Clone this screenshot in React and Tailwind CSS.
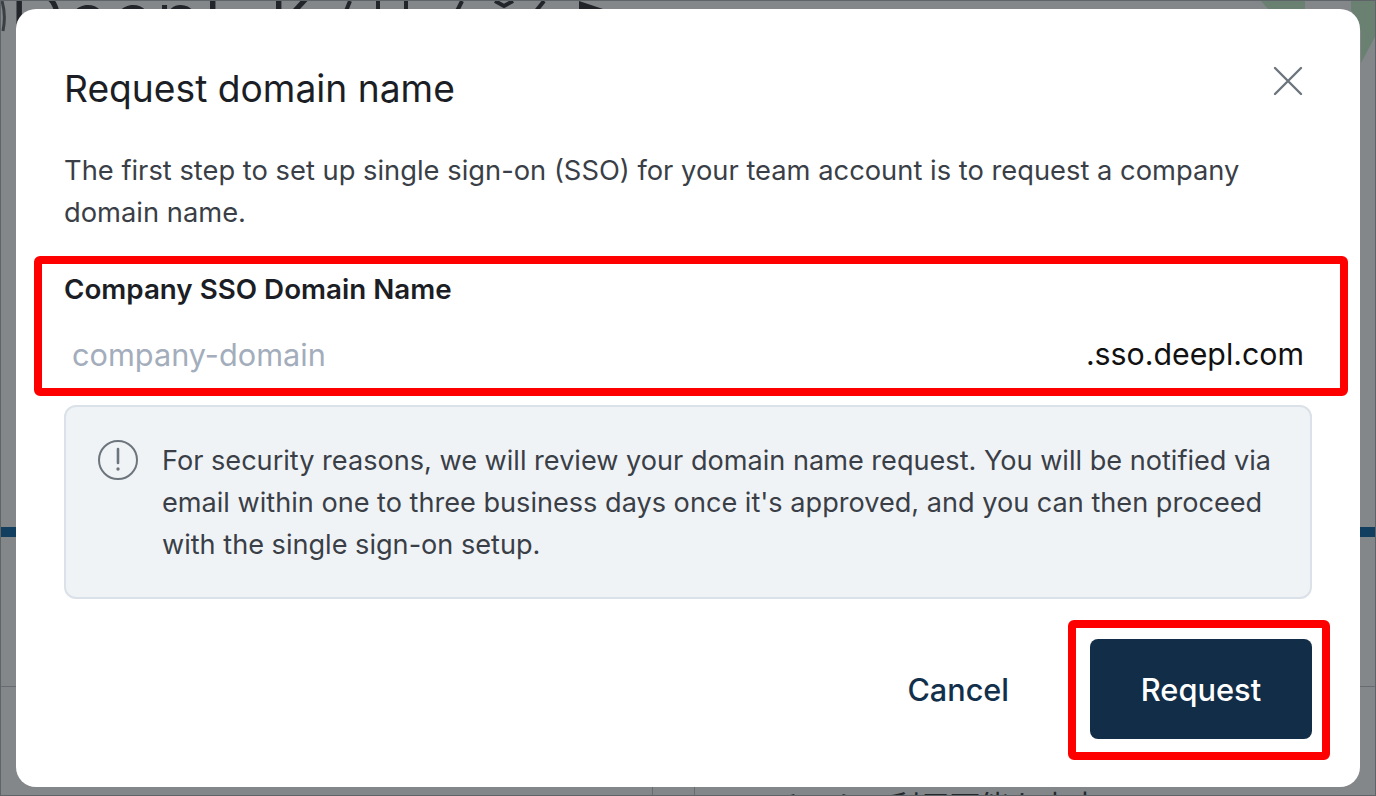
import React from "react";

function Backdrop() {
  return (
    <div aria-hidden="true" className="absolute inset-0 overflow-hidden border border-[#5f6468] bg-[#83878a]">
      <svg className="absolute inset-0 h-[796px] w-[1376px]" viewBox="0 0 1376 796" fill="none">
        <path d="M1260 0 H1304 V9 H1268 Z" fill="#6a8071" />
        <path d="M1350 0 H1376 V32 L1360 62 V30 L1350 9 Z" fill="#6a8071" />
        <path d="M1 0 C4 10 4 20 2 30" stroke="#3a3f44" strokeWidth="3" />
        <g stroke="#22262b" strokeWidth="4">
          <path d="M349 0 L345 10" />
          <path d="M377 0 V10" />
          <path d="M405 0 V10" />
          <path d="M461 0 L456 10" />
          <path d="M494 0 L503 5 L512 0" />
          <path d="M543 0 L535 10" />
        </g>
        <path d="M578 0 L608 10 H578 Z" fill="#22262b" />
      </svg>
      <div className="absolute left-[8px] top-[-28px] whitespace-nowrap text-[78px] font-light leading-[94px] text-[#22262b]">DeepL K</div>
      <div className="absolute left-0 top-[526px] h-[10px] w-full bg-[#123f5f]" />
      <div className="absolute left-0 top-[685px] h-px w-full bg-[#686c70]" />
      <div className="absolute left-[651px] top-[786px] h-[9px] w-px bg-[#686c70]" />
      <div className="absolute left-[693px] top-[786px] h-[9px] w-px bg-[#686c70]" />
      <div className="absolute left-[770px] top-[781px] whitespace-nowrap font-['Noto_Sans_CJK_JP',sans-serif] text-[30px] leading-[44px] text-[#25292c]">チームで利用可能な文字</div>
    </div>
  );
}

export default function App() {
  return (
    <div className="relative flex h-[796px] w-[1376px] justify-center overflow-hidden pt-[9px] font-['Inter','Liberation_Sans',sans-serif]">
      <Backdrop />
      <div className="relative h-[778px] w-[1344px] rounded-[20px] bg-white px-12">
        <div className="flex items-center justify-between pr-[9px] pt-[54px]">
          <h2 className="text-[37.2px] font-normal leading-[52px] text-[#1b1e25]">Request domain name</h2>
          <svg className="-mt-[16px] h-[30px] w-[30px]" viewBox="0 0 30 30" fill="none" stroke="#6c757d" strokeWidth="2.4" strokeLinecap="round">
            <path d="M2 2 L28 28 M28 2 L2 28" />
          </svg>
        </div>

        <p className="mt-[35px] text-[27.32px] leading-[42px] text-[#3a3f47]">
          The first step to set up single sign-on (SSO) for your team account is to request a company domain name.
        </p>

        <div className="relative mt-[36px] h-[120px]">
          <div className="absolute -bottom-[6px] -left-[30px] -right-[36px] -top-[14px] rounded-[6px] border-[8px] border-[#ff0000]" />
          <label className="block text-[27.75px] font-semibold leading-[38px] text-[#1b1e25]">Company SSO Domain Name</label>
          <div className="mt-[17px] flex h-[60px] items-center justify-between px-2">
            <span className="text-[30.7px] text-[#a3adbc]">company-domain</span>
            <span className="text-[30.3px] text-[#111111]">.sso.deepl.com</span>
          </div>
        </div>

        <div className="mt-[15px] flex h-[194px] gap-[24px] rounded-[12px] border-2 border-[#dae1e8] bg-[#f0f3f6] pl-[32px] pr-[24px] pt-[33px]">
          <svg className="h-[40px] w-[40px] shrink-0" viewBox="0 0 40 40" fill="none" stroke="#6c757d" strokeWidth="2">
            <circle cx="20" cy="20" r="19" />
            <path d="M20 9 V23" strokeWidth="2.6" strokeLinecap="round" />
            <circle cx="20" cy="29" r="1.7" fill="#6c757d" stroke="none" />
          </svg>
          <p className="text-[27.12px] leading-[42px] text-[#3a3f47]">
            For security reasons, we will review your domain name request. You will be notified via email within one to three business days once it's approved, and you can then proceed with the single sign-on setup.
          </p>
        </div>

        <div className="mt-[40px] flex items-center justify-end gap-[81px]">
          <button className="pt-[2px] text-[30.6px] font-medium text-[#12304b]">Cancel</button>
          <div className="relative">
            <div className="absolute -bottom-[21px] -left-[22px] -right-[18px] -top-[19px] rounded-[6px] border-[8px] border-[#ff0000]" />
            <button className="h-[100px] w-[222px] rounded-[8px] bg-[#122d47] pt-[2px] text-[30.8px] font-medium text-white">Request</button>
          </div>
        </div>
      </div>
    </div>
  );
}
